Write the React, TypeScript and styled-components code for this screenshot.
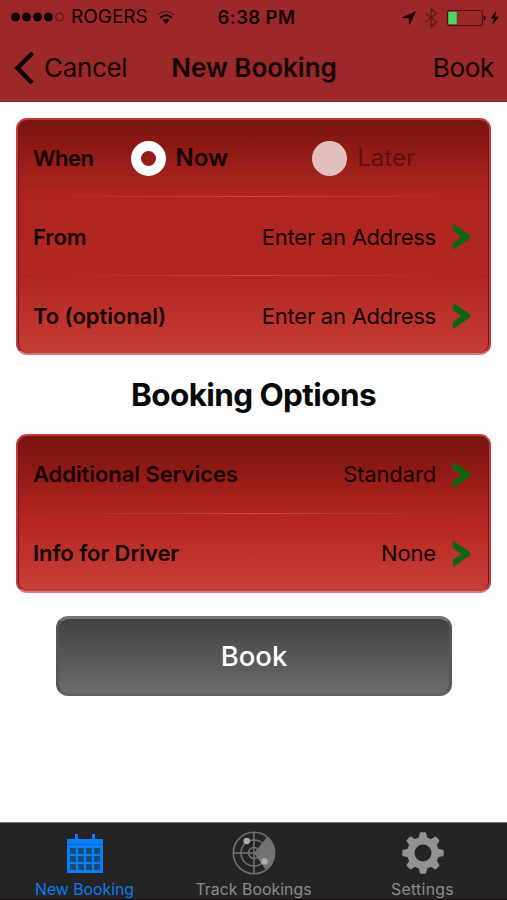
import React from "react";
import styled, { createGlobalStyle } from "styled-components";

const GlobalStyle = createGlobalStyle`
  * { box-sizing: border-box; }
  body { margin: 0; background: #fff; }
`;

const Screen = styled.div`
  width: 507px;
  height: 900px;
  display: flex;
  flex-direction: column;
  overflow: hidden;
  background: #fefefe;
  color: #120000;
  font-family: Inter, "Liberation Sans", sans-serif;
`;

const Header = styled.header`
  height: 102px;
  flex: none;
  background: #9c2829;
  border-bottom: 1px solid #8d2022;
`;

const StatusBar = styled.div`
  height: 35px;
  display: grid;
  grid-template-columns: 1fr auto 1fr;
  align-items: center;
  padding: 0 8px 0 11px;
`;

const StatusGroup = styled.div<{ $end?: boolean }>`
  display: flex;
  align-items: center;
  gap: 6px;
  justify-content: ${(p) => (p.$end ? "flex-end" : "flex-start")};
`;

const Text = styled.span<{ $size: number; $weight?: number; $track?: number; $color?: string }>`
  font-size: ${(p) => p.$size}px;
  font-weight: ${(p) => p.$weight ?? 400};
  letter-spacing: ${(p) => p.$track ?? 0}px;
  color: ${(p) => p.$color ?? "inherit"};
  line-height: 1.2;
  white-space: nowrap;
`;

const Clock = styled.time`
  padding-left: 3px;
  line-height: 1;
`;

const NavBar = styled.nav`
  height: 66px;
  display: grid;
  grid-template-columns: 1fr auto 1fr;
  align-items: center;
  padding: 0 13px 0 14px;
`;

const NavButton = styled.button<{ $end?: boolean }>`
  display: flex;
  align-items: center;
  gap: 9px;
  padding: 0;
  border: 0;
  background: none;
  color: inherit;
  font-family: inherit;
  justify-self: ${(p) => (p.$end ? "end" : "start")};
`;

const Content = styled.main`
  flex: 1;
  display: flex;
  flex-direction: column;
  padding: 16px 16px 0 16px;
`;

const Row = styled.div`
  flex: none;
  display: flex;
  align-items: center;
  padding: 0 18px 0 15px;
`;

const Panel = styled.section<{ $rows: number }>`
  height: ${(p) => (p.$rows === 3 ? 237 : 159)}px;
  display: flex;
  flex-direction: column;
  border-radius: 11px;
  border: 2px solid;
  border-color: #c4393a #b34043 #d9797a #b34043;
  background: ${(p) =>
    p.$rows === 3
      ? "linear-gradient(#78140f 0, #8b1813 24px, #b02520 76px, #b32621 158px, #c43d37 100%)"
      : "linear-gradient(#78140f 0, #8f1914 34px, #b02520 76px, #bb2b25 100px, #c54039 100%)"};
  box-shadow: inset 1px 0 #870f11, inset -1px 0 #870f11;

  ${Row} {
    height: ${(p) => (p.$rows === 3 ? 76 : 77)}px;
  }
  ${Row} + ${Row} {
    height: 79px;
    padding-top: ${(p) => (p.$rows === 3 ? 2 : 1)}px;
    border-top: 1px solid;
    border-image: linear-gradient(90deg, #9f2421, #c94a48 50%, #9f2421) 1;
  }
`;

const Value = styled.div`
  margin-left: auto;
  display: flex;
  align-items: center;
  gap: 16px;
`;

const Choice = styled.div<{ $off?: boolean }>`
  display: flex;
  align-items: center;
  gap: 10px;
  margin-left: ${(p) => (p.$off ? 84 : 37)}px;
`;

const Radio = styled.i<{ $off?: boolean }>`
  width: 35px;
  height: 35px;
  border-radius: 50%;
  border: ${(p) => (p.$off ? "0" : "10px solid #fff")};
  background: ${(p) => (p.$off ? "#e2bfbf" : "transparent")};
`;

const Heading = styled.h1`
  height: 79px;
  margin: 0;
  padding-top: 1px;
  display: flex;
  align-items: center;
  justify-content: center;
  color: #080808;
`;

const BookButton = styled.button`
  width: 396px;
  height: 80px;
  margin: 23px 0 0 40px;
  padding: 1px 0 0;
  border: 3px solid;
  border-color: #747474 #565656 #636363;
  border-radius: 12px;
  background: linear-gradient(#424242, #6b6b6b);
  color: #fff;
  font-family: inherit;
`;

const TabBar = styled.footer`
  height: 78px;
  flex: none;
  display: grid;
  grid-template-columns: repeat(3, 1fr);
  background: #242424;
  border-top: 1px solid #777;
  border-bottom: 1px solid #1b0d12;
`;

const Tab = styled.div<{ $active?: boolean }>`
  display: grid;
  grid-template-rows: 44px 20px;
  row-gap: 5px;
  place-items: center;
  align-content: start;
  padding-top: 8px;
  color: ${(p) => (p.$active ? "#0a7bf0" : "#8c8c8c")};
`;

const Signal = () => (
  <svg width="54" height="12" viewBox="0 0 54 12">
    {[4.5, 15.5, 26.5, 37.5].map((x) => (
      <circle key={x} cx={x} cy="6" r="4.5" fill="#120000" />
    ))}
    <circle cx="48.5" cy="6" r="3.9" fill="none" stroke="#4d1010" />
  </svg>
);

const Wifi = () => (
  <svg width="21" height="15" viewBox="-3 0 21 15" fill="none">
    <path d="M.8 4.8Q9-2.2 17.2 4.8" stroke="#6d1919" strokeWidth="1.6" />
    <path d="M3.2 7.8Q9 2.8 14.8 7.8" stroke="#120000" strokeWidth="2" />
    <path d="M5.5 10.2Q9 7.4 12.5 10.2L9 13.8Z" fill="#120000" />
  </svg>
);

const StatusIcons = () => (
  <svg width="98" height="22" viewBox="401 6 98 22" fill="none">
    <path d="M401.5 16.8 416 10.2 409.5 24.3 408.6 17.3Z" fill="#120000" />
    <path d="M425.5 12.2 436.5 21 431 25.6V7.6L436.5 12.2 425.5 21" stroke="#641819" strokeWidth="1.6" />
    <rect x="447.5" y="9.5" width="35" height="15" rx="2.5" stroke="#4d1010" strokeWidth="1.2" />
    <path d="M448.3 10.8H456.7V23.2H448.3Z" fill="#4cd964" />
    <path d="M483.7 14.5Q485.8 14.5 485.8 17T483.7 19.5Z" fill="#120000" />
    <path d="M496.5 9.5 490.5 17.5H494.3L492 24.3 499 15.7H495Z" fill="#120000" />
  </svg>
);

const BackChevron = () => (
  <svg width="21" height="34" viewBox="0 0 21 34" fill="none">
    <path d="M18.5 2 3.5 17 18 32" stroke="#120000" strokeWidth="4.4" />
  </svg>
);

const Arrow = () => (
  <svg width="19" height="28" viewBox="0 0 19 28">
    <path d="M1 .8 18 12V15.5L1 27V20L9.5 14 1 8Z" fill="#0b6511" />
    <path d="M1 .8V8L9.5 14 1 20V26.5" fill="none" stroke="#35600f" strokeWidth=".7" />
  </svg>
);

const CalendarIcon = () => (
  <svg width="38" height="41" viewBox="0 0 38 41">
    <path d="M1 6H37V40H1Z" fill="#087ff7" />
    <path d="M9 1h3v7H9zM26 1h3v7h-3z" fill="#087ff7" />
    <path d="M1 11.5H37" stroke="#0a66c4" />
    {[15, 23, 31].map((y) =>
      [4, 12, 20, 28].map((x) => (
        <rect key={`${x}-${y}`} x={x} y={y} width="6" height="6" fill="#164b80" />
      )),
    )}
  </svg>
);

const RadarIcon = () => (
  <svg width="44" height="44" viewBox="0 0 44 44" fill="none" stroke="#707070" strokeWidth="1.6">
    <path d="M22 22 35 6A21 21 0 0 1 34 39Z" fill="#747474" stroke="none" />
    <circle cx="22" cy="22" r="20.7" />
    <circle cx="22" cy="22" r="13" />
    <circle cx="22" cy="22" r="5.5" />
    <path d="M1 22H43M22 1V43" />
    <circle cx="14.7" cy="10" r="3.3" fill="#aaa" stroke="none" />
    <circle cx="32.5" cy="30.5" r="3.3" fill="#aaa" stroke="none" />
  </svg>
);

const GearIcon = () => (
  <svg width="42" height="42" viewBox="-21 -21 42 42" fill="#929292">
    <circle r="12.2" fill="none" stroke="#929292" strokeWidth="7.4" />
    {[0, 45, 90, 135, 180, 225, 270, 315].map((a) => (
      <path key={a} transform={`rotate(${a})`} d="M-4.5-14-3.3-19.5Q-3-20.7-2-20.7H2Q3-20.7 3.3-19.5L4.5-14Z" />
    ))}
  </svg>
);

type OptionRowProps = { label: string; value: string; valueTrack?: number };

const OptionRow = ({ label, value, valueTrack = -0.15 }: OptionRowProps) => (
  <Row>
    <Text $size={22} $weight={600} $track={-0.07}>{label}</Text>
    <Value>
      <Text $size={22} $track={valueTrack}>{value}</Text>
      <Arrow />
    </Value>
  </Row>
);

export default function App() {
  return (
    <Screen>
      <GlobalStyle />
      <Header>
        <StatusBar>
          <StatusGroup>
            <Signal />
            <Text $size={19}>ROGERS</Text>
            <Wifi />
          </StatusGroup>
          <Clock>
            <Text $size={18.5} $weight={600} $track={0.4}>6:38 PM</Text>
          </Clock>
          <StatusGroup $end>
            <StatusIcons />
          </StatusGroup>
        </StatusBar>
        <NavBar>
          <NavButton>
            <BackChevron />
            <Text $size={26} $track={-0.35}>Cancel</Text>
          </NavButton>
          <Text $size={26} $weight={600}>New Booking</Text>
          <NavButton $end>
            <Text $size={26} $track={-0.3}>Book</Text>
          </NavButton>
        </NavBar>
      </Header>
      <Content>
        <Panel $rows={3}>
          <Row>
            <Text $size={22} $weight={600} $track={-0.45}>When</Text>
            <Choice>
              <Radio />
              <Text $size={24} $weight={600}>Now</Text>
            </Choice>
            <Choice $off>
              <Radio $off />
              <Text $size={24} $color="#5d1010">Later</Text>
            </Choice>
          </Row>
          <OptionRow label="From" value="Enter an Address" valueTrack={-0.25} />
          <OptionRow label="To (optional)" value="Enter an Address" valueTrack={-0.25} />
        </Panel>
        <Heading>
          <Text $size={31.5} $weight={700} $track={-0.6}>Booking Options</Text>
        </Heading>
        <Panel $rows={2}>
          <OptionRow label="Additional Services" value="Standard" />
          <OptionRow label="Info for Driver" value="None" />
        </Panel>
        <BookButton>
          <Text $size={27.5} $weight={550}>Book</Text>
        </BookButton>
      </Content>
      <TabBar>
        <Tab $active>
          <CalendarIcon />
          <Text $size={15.8}>New Booking</Text>
        </Tab>
        <Tab>
          <RadarIcon />
          <Text $size={15.8} $track={0.05}>Track Bookings</Text>
        </Tab>
        <Tab>
          <GearIcon />
          <Text $size={15.8} $track={0.3}>Settings</Text>
        </Tab>
      </TabBar>
    </Screen>
  );
}
